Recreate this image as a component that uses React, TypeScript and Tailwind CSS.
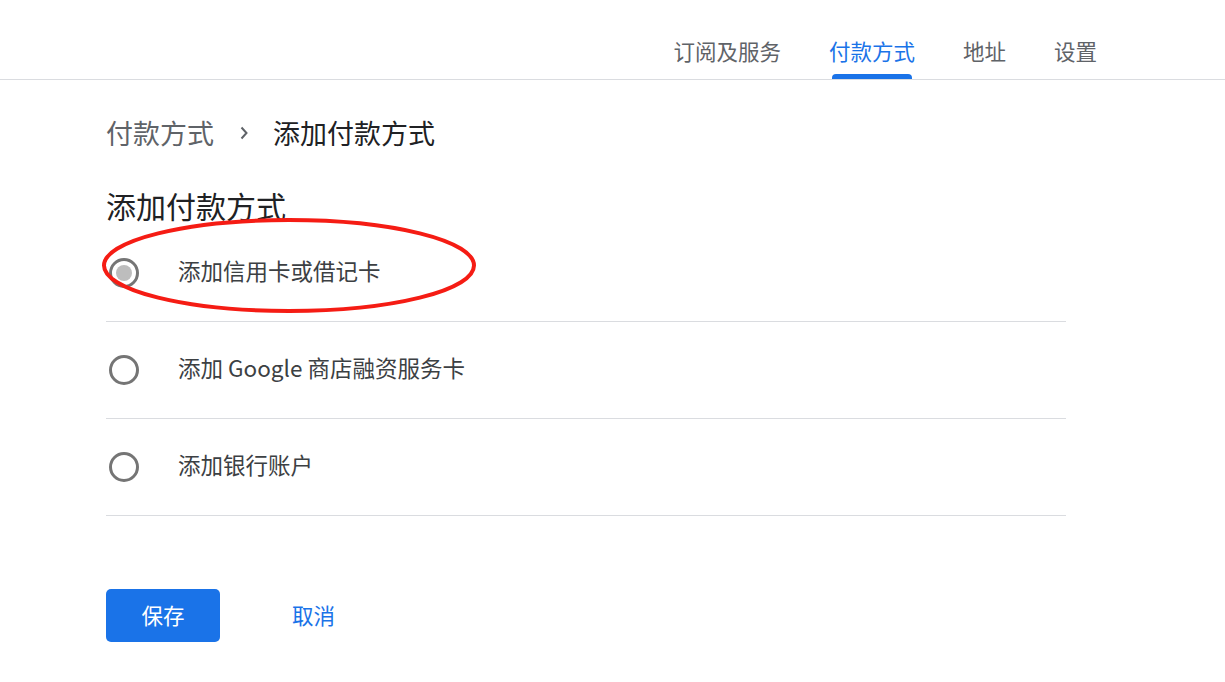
import React from "react";

const font = { fontFamily: '"Noto Sans CJK SC", "Noto Sans", sans-serif' };

function Radio({ disabled }: { disabled?: boolean }) {
  return (
    <div className="w-[36px] h-[36px] flex items-center justify-center shrink-0">
      <div className="w-[30px] h-[30px] rounded-full border-[3px] border-[#757575] flex items-center justify-center">
        {disabled && <div className="w-[16px] h-[16px] rounded-full bg-[#bdbdbd]" />}
      </div>
    </div>
  );
}

export default function App() {
  const tabs = ["订阅及服务", "付款方式", "地址", "设置"];
  const rows = [
    { label: "添加信用卡或借记卡", disabled: true },
    { label: "添加 Google 商店融资服务卡" },
    { label: "添加银行账户" },
  ];
  return (
    <div className="relative w-[1225px] h-[682px] bg-white overflow-hidden" style={font}>
      <nav className="h-[80px] border-b border-[#dadce0] flex justify-end pr-[104px]">
        {tabs.map((t, i) => (
          <div key={t} className="px-[24px] flex flex-col">
            <div
              className={
                "pt-[37px] h-[66px] leading-[28px] text-[21.5px] whitespace-nowrap " +
                (i === 1 ? "text-[#1a73e8]" : "text-[#5f6368]")
              }
            >
              {t}
            </div>
            <div className={"mt-[8px] mx-[3px] h-[5px] rounded-t-[4px] " + (i === 1 ? "bg-[#1a73e8]" : "")} />
          </div>
        ))}
      </nav>

      <main className="pl-[106px] w-[1066px]">
        <div className="mt-[35px] flex items-center h-[36px] text-[27px] leading-[36px]">
          <span className="text-[#5f6368]">付款方式</span>
          <svg width="8" height="14" viewBox="0 0 8 14" className="ml-[26px] mr-[25px]">
            <path d="M1.5 1.5 L6.5 7 L1.5 12.5" fill="none" stroke="#5f6368" strokeWidth="2" />
          </svg>
          <span className="text-[#202124]">添加付款方式</span>
        </div>

        <h1 className="mt-[34px] text-[30px] leading-[40px] text-[#202124] font-normal">添加付款方式</h1>

        <div>
          {rows.map((r) => (
            <div key={r.label} className="h-[97px] border-b border-[#dadce0] flex items-center">
              <Radio disabled={r.disabled} />
              <span className="ml-[36px] mb-[5px] text-[22.5px] text-[#3c4043]">{r.label}</span>
            </div>
          ))}
        </div>

        <div className="mt-[73px] flex items-center">
          <button className="w-[114px] h-[53px] rounded-[5px] bg-[#1a73e8] text-white text-[21.5px]">保存</button>
          <button className="ml-[72px] text-[21.5px] text-[#1a73e8]">取消</button>
        </div>
      </main>

      <svg className="absolute left-0 top-0 pointer-events-none" width="1225" height="682">
        <ellipse cx="289" cy="265.5" rx="185" ry="45.5" fill="none" stroke="#f51c14" strokeWidth="4" />
      </svg>
    </div>
  );
}
